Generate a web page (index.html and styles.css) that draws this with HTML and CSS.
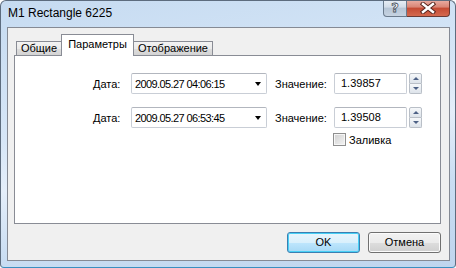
FILE: index.html
```html
<!DOCTYPE html>
<html lang="ru">
<head>
    <meta charset="UTF-8">
    <title>M1 Rectangle 6225</title>
    <link rel="stylesheet" href="styles.css">
</head>
<body>
    <div class="window">
        <div class="titlebar">
            <div class="title">M1 Rectangle 6225</div>
            <div class="caption-btns">
                <div class="btn-help"><span>?</span></div>
                <div class="btn-close">
                    <svg width="16" height="12" viewBox="0 0 16 12">
                        <path d="M3 2 L13 10 M13 2 L3 10" stroke="#5a2820" stroke-width="4.4" stroke-linecap="square"/>
                        <path d="M3 2 L13 10 M13 2 L3 10" stroke="#fff" stroke-width="2.4" stroke-linecap="square"/>
                    </svg>
                </div>
            </div>
        </div>

        <div class="client">
            <div class="tabs">
                <div class="tab tab-general">Общие</div>
                <div class="tab tab-params active">Параметры</div>
                <div class="tab tab-view">Отображение</div>
            </div>

            <div class="panel">
                <div class="row">
                    <span class="lbl-date">Дата:</span>
                    <div class="combo">
                        <span class="date-text">2009.05.27 04:06:15</span>
                        <span class="arrow"></span>
                    </div>
                    <span class="lbl-val">Значение:</span>
                    <div class="edit">1.39857</div>
                    <div class="spin">
                        <div class="spin-up"><span></span></div>
                        <div class="spin-down"><span></span></div>
                    </div>
                </div>
                <div class="row row-second">
                    <span class="lbl-date">Дата:</span>
                    <div class="combo">
                        <span class="date-text">2009.05.27 06:53:45</span>
                        <span class="arrow"></span>
                    </div>
                    <span class="lbl-val">Значение:</span>
                    <div class="edit">1.39508</div>
                    <div class="spin">
                        <div class="spin-up"><span></span></div>
                        <div class="spin-down"><span></span></div>
                    </div>
                </div>
                <div class="check-row">
                    <span class="checkbox"></span>
                    <span class="check-label">Заливка</span>
                </div>
            </div>

            <div class="buttons">
                <div class="btn btn-default">OK</div>
                <div class="btn">Отмена</div>
            </div>
        </div>
    </div>
</body>
</html>
```

FILE: styles.css
```css
body {
    margin: 0;
    background: #fff;
    font-family: "Liberation Sans", Arial, sans-serif;
    font-size: 11px;
    color: #000;
}

.window {
    width: 456px;
    height: 268px;
    box-sizing: border-box;
    border: 1px solid #5d6c7e;
    border-bottom-color: #3a8fc0;
    border-radius: 6px 6px 4px 4px;
    background: linear-gradient(170deg, #c6dbf1 0%, #d6e6f7 40%, #e4eefa 55%, #c9ddf2 75%, #bfd5ee 100%);
    padding: 0 5px 6px 6px;
    display: flex;
    flex-direction: column;
    overflow: hidden;
}

.titlebar {
    height: 26px;
    display: flex;
    justify-content: space-between;
    align-items: flex-start;
}
.title {
    padding: 5px 0 0 1px;
    line-height: 15px;
    font-size: 12px;
    color: #000;
}
.caption-btns {
    display: flex;
    height: 17px;
    margin-top: -1px;
}
.btn-help {
    width: 24px;
    box-sizing: border-box;
    border: 1px solid #6a7a8c;
    border-top: none;
    border-radius: 0 0 0 4px;
    background: linear-gradient(#e9eff6, #d2dce8 45%, #b6c5d6 50%, #c6d3e2);
    text-align: center;
}
.btn-help span {
    font-family: "DejaVu Sans", sans-serif;
    font-weight: bold;
    font-size: 13px;
    line-height: 16px;
    color: #fff;
    -webkit-text-stroke: 0.8px #46505c;
}
.btn-close {
    width: 43px;
    box-sizing: border-box;
    border: 1px solid #6a3a34;
    border-left: none;
    border-top: none;
    border-radius: 0 0 4px 0;
    background: linear-gradient(#eab0a6, #d98474 45%, #c44a33 50%, #d4694f);
    display: flex;
    justify-content: center;
    align-items: center;
}

.client {
    flex: 1;
    border: 1px solid #858a94;
    background: #f0f0f0;
    padding: 6px 8px 7px 6px;
    display: flex;
    flex-direction: column;
}

.tabs {
    display: flex;
    align-items: flex-end;
    height: 21px;
    padding-left: 2px;
}
.tab {
    box-sizing: border-box;
    height: 14px;
    border: 1px solid #898c95;
    border-bottom: none;
    background: linear-gradient(#f3f3f3, #ebebeb 50%, #dedede 51%, #d3d3d3);
    text-align: center;
    line-height: 13px;
}
.tab + .tab {
    margin-left: -1px;
}
.tab-general { width: 46px; }
.tab-params { width: 73px; }
.tab-view { width: 80px; }
.tab.active {
    height: 22px;
    margin-bottom: -1px;
    background: #fff;
    line-height: 18px;
    position: relative;
    z-index: 1;
}

.panel {
    height: 169px;
    box-sizing: border-box;
    border: 1px solid #898c95;
    background: #fff;
    padding: 17px 0 0 78px;
}

.row {
    display: flex;
    align-items: center;
    height: 21px;
}
.row-second {
    margin-top: 13px;
}
.lbl-date {
    width: 38px;
}
.combo {
    width: 136px;
    height: 21px;
    box-sizing: border-box;
    border: 1px solid #c9ced6;
    border-top-color: #b2b6be;
    border-radius: 2px;
    padding: 0 5px 0 3px;
    display: flex;
    align-items: center;
    justify-content: space-between;
}
.date-text {
    letter-spacing: -0.6px;
}
.arrow {
    width: 0;
    height: 0;
    border-left: 3.5px solid transparent;
    border-right: 3.5px solid transparent;
    border-top: 4px solid #000;
}
.lbl-val {
    width: 59px;
    margin-left: 8px;
}
.edit {
    width: 73px;
    height: 21px;
    box-sizing: border-box;
    border: 1px solid #c9ced6;
    border-top-color: #b2b6be;
    border-radius: 2px;
    padding-left: 6px;
    line-height: 19px;
}
.spin {
    width: 13px;
    height: 21px;
    margin-left: 2px;
    display: flex;
    flex-direction: column;
}
.spin-up, .spin-down {
    flex: 1;
    box-sizing: border-box;
    border: 1px solid #b9bfc7;
    background: linear-gradient(#f6f8fa, #dde3ea);
    display: flex;
    align-items: center;
    justify-content: center;
}
.spin-up {
    border-radius: 2px 2px 0 0;
}
.spin-down {
    border-top: none;
    border-radius: 0 0 2px 2px;
}
.spin-up span {
    border-left: 3px solid transparent;
    border-right: 3px solid transparent;
    border-bottom: 3px solid #4d6185;
}
.spin-down span {
    border-left: 3px solid transparent;
    border-right: 3px solid transparent;
    border-top: 3px solid #4d6185;
}

.check-row {
    display: flex;
    align-items: center;
    margin-top: 5px;
    padding-left: 240px;
    height: 13px;
}
.checkbox {
    width: 13px;
    height: 13px;
    box-sizing: border-box;
    border: 1px solid #8f8f8f;
    background: linear-gradient(135deg, #d0d0d0, #f4f4f4);
    box-shadow: inset 0 0 0 1px #f6f6f6;
}
.check-label {
    margin-left: 3px;
}

.buttons {
    display: flex;
    justify-content: flex-end;
    gap: 8px;
    margin-top: 8px;
}
.btn {
    width: 73px;
    height: 21px;
    box-sizing: border-box;
    border: 1px solid #707070;
    border-radius: 3px;
    background: linear-gradient(#f2f2f2, #ebebeb 50%, #dddddd 51%, #cfcfcf);
    box-shadow: inset 0 0 0 1px #fbfbfb;
    text-align: center;
    line-height: 19px;
}
.btn-default {
    border-color: #3c7fb1;
    background: linear-gradient(#eaf6fd, #d9f0fc 50%, #bee6fd 51%, #a7d9f5);
    box-shadow: inset 0 0 0 1px #48d0f6;
}
```
